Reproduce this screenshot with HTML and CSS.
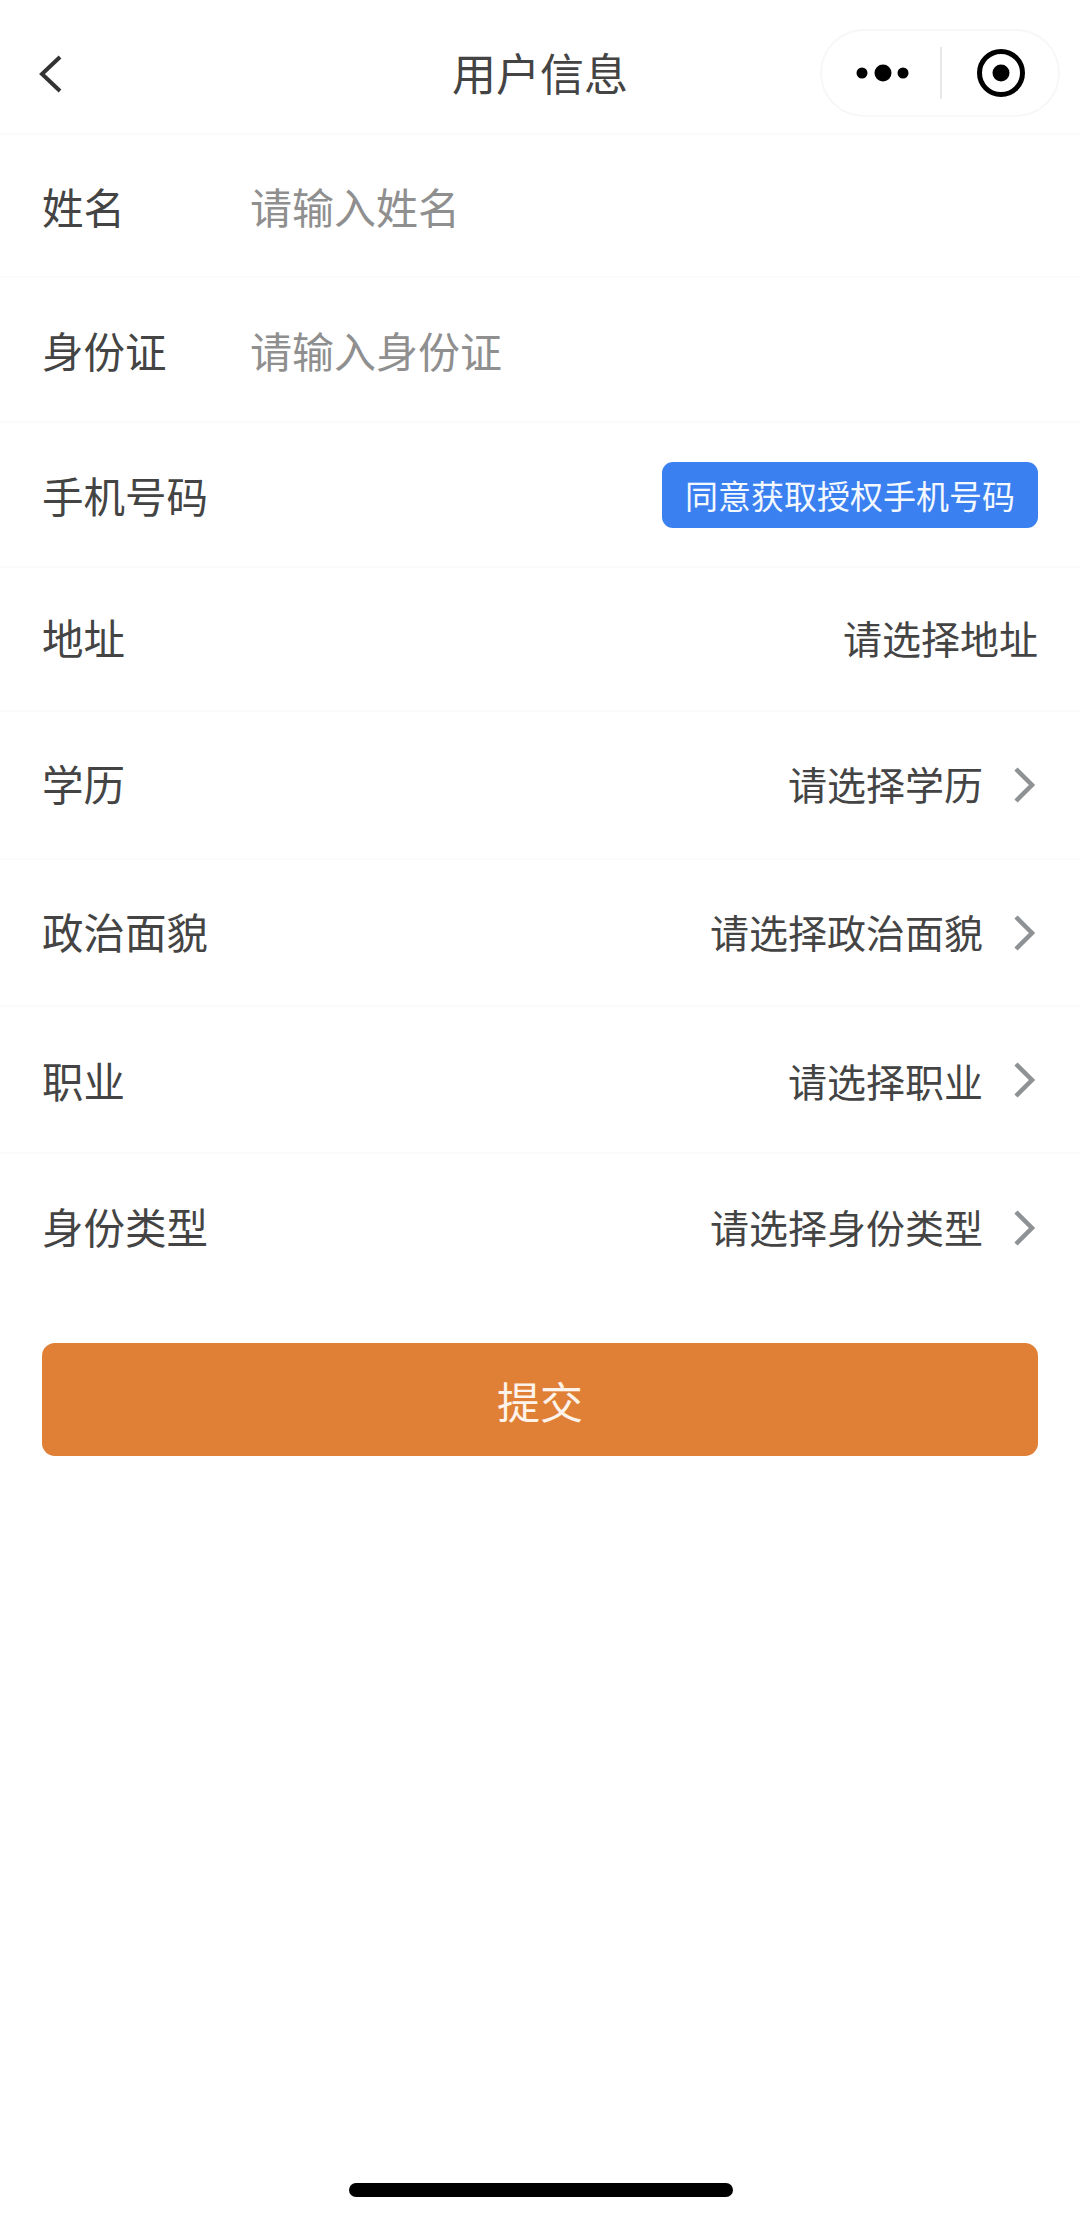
FILE: index.html
```html
<!DOCTYPE html>
<html lang="zh-CN">
<head>
    <meta charset="UTF-8">
    <meta name="viewport" content="width=device-width, initial-scale=1.0">
    <title>用户信息</title>
    <link rel="stylesheet" href="styles.css">
</head>
<body>
    <header class="nav">
        <svg class="nav-back" viewBox="0 0 26 38" width="26" height="38">
            <path d="M22 2 L4 19 L22 36" fill="none" stroke="#333" stroke-width="4"/>
        </svg>
        <h1 class="nav-title">用户信息</h1>
        <div class="capsule">
            <svg class="capsule-more" viewBox="0 0 54 18" width="54" height="18">
                <circle cx="6" cy="9" r="5.5"/>
                <circle cx="27" cy="9" r="8.5"/>
                <circle cx="47" cy="9" r="5.5"/>
            </svg>
            <span class="capsule-line"></span>
            <svg class="capsule-close" viewBox="0 0 48 48" width="48" height="48">
                <circle cx="24" cy="24" r="21.5" fill="none" stroke="#000" stroke-width="5"/>
                <circle cx="24" cy="24" r="8.5"/>
            </svg>
        </div>
    </header>

    <form class="form">
        <div class="row row-142">
            <label>姓名</label>
            <span class="hint">请输入姓名</span>
        </div>
        <div class="row row-145">
            <label>身份证</label>
            <span class="hint">请输入身份证</span>
        </div>
        <div class="row row-145">
            <label>手机号码</label>
            <button type="button" class="btn-phone">同意获取授权手机号码</button>
        </div>
        <div class="row row-144 row-up">
            <label>地址</label>
            <span class="value">请选择地址</span>
        </div>
        <div class="row row-148 row-up">
            <label>学历</label>
            <span class="value">请选择学历</span>
            <svg class="arrow" viewBox="0 0 24 38" width="24" height="38"><path d="M4 3 L20 19 L4 35"/></svg>
        </div>
        <div class="row row-147 row-up">
            <label>政治面貌</label>
            <span class="value">请选择政治面貌</span>
            <svg class="arrow" viewBox="0 0 24 38" width="24" height="38"><path d="M4 3 L20 19 L4 35"/></svg>
        </div>
        <div class="row row-147">
            <label>职业</label>
            <span class="value">请选择职业</span>
            <svg class="arrow" viewBox="0 0 24 38" width="24" height="38"><path d="M4 3 L20 19 L4 35"/></svg>
        </div>
        <div class="row row-last row-up">
            <label>身份类型</label>
            <span class="value">请选择身份类型</span>
            <svg class="arrow" viewBox="0 0 24 38" width="24" height="38"><path d="M4 3 L20 19 L4 35"/></svg>
        </div>
        <button type="button" class="btn-submit">提交</button>
    </form>

    <div class="home-bar"></div>
</body>
</html>
```

FILE: styles.css
```css
* {
    box-sizing: border-box;
}
html, body {
    margin: 0;
    height: 100%;
}
body {
    width: 1080px;
    height: 2216px;
    display: flex;
    flex-direction: column;
    background: #fff;
    color: #444;
    font-family: "Noto Sans CJK SC", "Noto Sans", sans-serif;
    font-weight: 400;
    overflow: hidden;
}
.nav {
    height: 135px;
    flex: none;
    display: flex;
    align-items: flex-start;
    position: relative;
    padding: 29px 20px 0 38px;
    border-bottom: 2px solid #fbfbfb;
}
.nav-back {
    margin-top: 26px;
}
.nav-title {
    margin: 0;
    position: absolute;
    left: 0;
    right: 0;
    top: 40px;
    text-align: center;
    font-size: 44px;
    line-height: 64px;
    font-weight: 400;
}
.capsule {
    margin-left: auto;
    width: 240px;
    height: 88px;
    border: 2px solid #f7f7f7;
    border-radius: 44px;
    display: flex;
    align-items: center;
    background: #fff;
    position: relative;
}
.capsule-more {
    margin-left: 34px;
}
.capsule-line {
    width: 2px;
    height: 52px;
    margin-left: 30px;
    background: #e8e8e8;
}
.capsule-close {
    margin-left: 35px;
}
.form {
    display: flex;
    flex-direction: column;
    padding: 0 42px;
    flex: 1;
}
.row {
    display: flex;
    align-items: center;
    margin: 0 -42px;
    padding: 0 42px;
    border-bottom: 2px solid #fbfbfb;
    font-size: 41.5px;
}
.row label {
    width: 209px;
    flex: none;
}
.row-142 { height: 143px; }
.row-144 { height: 144px; }
.row-145 { height: 145px; }
.row-147 { height: 147px; }
.row-148 { height: 148px; }
.row-last {
    height: 147px;
    border-bottom: none;
}
.row-up label,
.row-up .value {
    padding-bottom: 4px;
}
.hint {
    color: #8f8f8f;
    margin-left: -1px;
    font-size: 42px;
}
.value {
    margin-left: auto;
    font-size: 39px;
}
.arrow {
    flex: none;
    margin-left: 29px;
    margin-right: 2px;
}
.arrow path {
    fill: none;
    stroke: #8e9294;
    stroke-width: 4.5;
}
.btn-phone {
    margin-left: auto;
    width: 376px;
    height: 66px;
    padding: 0;
    border: none;
    border-radius: 11px;
    background: #3a80f0;
    color: #f4f8ff;
    font-family: inherit;
    font-size: 33px;
    font-weight: 400;
}
.btn-submit {
    margin-top: 42px;
    height: 113px;
    padding: 0;
    border: none;
    border-radius: 13px;
    background: #e08036;
    color: #fdf3ea;
    font-family: inherit;
    font-size: 43px;
    font-weight: 400;
}
.home-bar {
    position: absolute;
    left: 349px;
    top: 2183px;
    width: 384px;
    height: 14px;
    border-radius: 7px;
    background: #000;
}
```
